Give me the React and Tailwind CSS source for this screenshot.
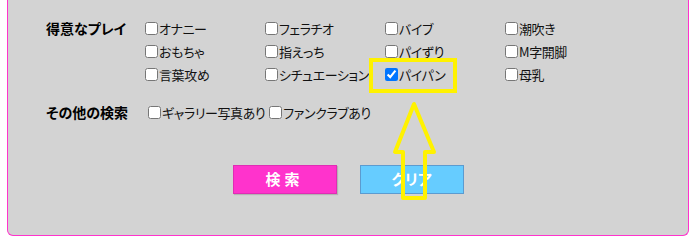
import React from "react";

const plays = [
  ["オナニー", "フェラチオ", "バイブ", "潮吹き"],
  ["おもちゃ", "指えっち", "パイずり", "M字開脚"],
  ["言葉攻め", "シチュエーション", "パイパン", "母乳"],
];

const Check = ({ label, checked }) => (
  <label className="flex items-center h-[23px] text-[13px] tracking-[-0.4px] text-[#111]">
    <input
      type="checkbox"
      defaultChecked={checked}
      className="m-0 mr-[1px] w-[13px] h-[13px] accent-[#0075ff]"
    />
    <span>{label}</span>
  </label>
);

export default function App() {
  return (
    <div
      className="bg-white w-[698px] h-[244px] pl-[7px] pr-[9px] [font-feature-settings:'palt']"
      style={{ fontFamily: '"Noto Sans CJK JP", "Noto Sans", sans-serif' }}
    >
      <div className="relative h-[236px] bg-[#d3d3d3] border-x border-b border-[#f3c] rounded-b-[6px] pt-[17px] pl-[38px]">
        {/* 得意なプレイ */}
        <div className="flex">
          <div className="w-[99px] h-[23px] flex items-center text-[14px] font-bold text-black">
            得意なプレイ
          </div>
          <div className="grid grid-cols-[120px_120px_120px_120px]">
            {plays.flat().map((p) => (
              <Check key={p} label={p} checked={p === "パイパン"} />
            ))}
          </div>
        </div>

        {/* その他の検索 */}
        <div className="flex mt-[15px]">
          <div className="w-[102px] h-[23px] flex items-center text-[14px] font-bold text-black">
            その他の検索
          </div>
          <div className="flex gap-[4px]">
            <Check label="ギャラリー写真あり" />
            <Check label="ファンクラブあり" />
          </div>
        </div>

        {/* buttons */}
        <div className="flex justify-center gap-[23px] mt-[41px] -ml-[38px]">
          <button className="w-[104px] h-[29px] bg-[#ff33cc] border border-[#e02db4] shadow-[1px_1px_1px_rgba(0,0,0,0.15)] text-white text-[15px] font-bold tracking-[4px]">
            検索
          </button>
          <button className="w-[104px] h-[29px] bg-[#66ccff] border border-[#5b9bd0] text-white text-[15px] font-bold">
            クリア
          </button>
        </div>

        {/* highlight */}
        <div className="absolute left-[361px] top-[58px] w-[88px] h-[35px] border-4 border-[#fff200]" />
        <svg
          className="absolute left-[384px] top-[101px]"
          width="46"
          height="100"
          viewBox="0 0 46 100"
        >
          <polygon
            points="22,3 3,51 11,51 11,97 33,97 33,51 42,51"
            fill="none"
            stroke="#fff200"
            strokeWidth="4"
            strokeLinejoin="round"
          />
        </svg>
      </div>
    </div>
  );
}
